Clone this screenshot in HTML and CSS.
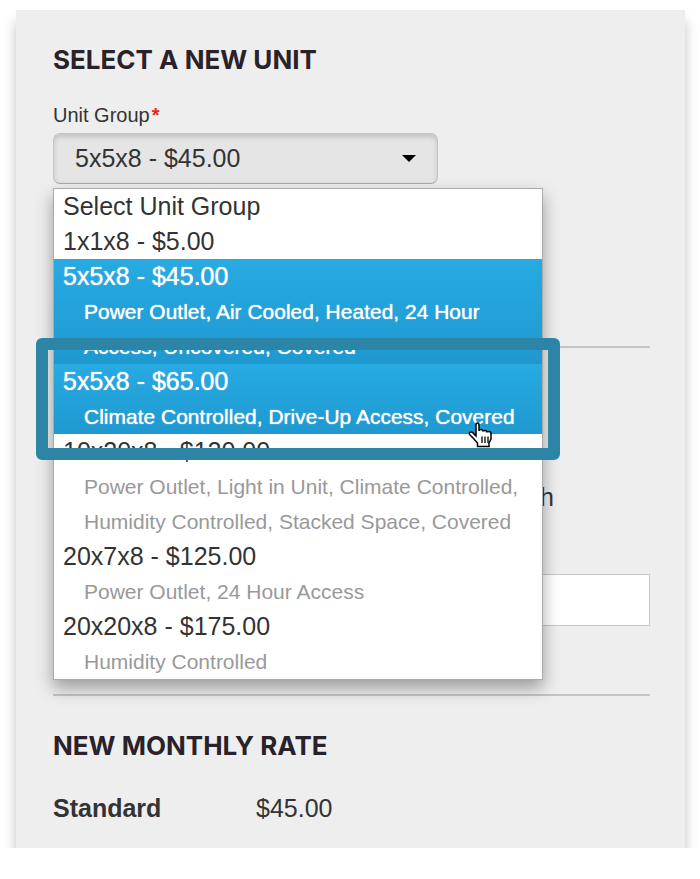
FILE: index.html
```html
<!DOCTYPE html>
<html lang="en">
<head>
    <meta charset="UTF-8">
    <meta name="viewport" content="width=device-width, initial-scale=1.0">
    <title>Select a New Unit</title>
    <link rel="stylesheet" href="styles.css">
</head>
<body>
    <main class="panel">
        <h2>SELECT A NEW UNIT</h2>

        <div class="unit-group">
            <label for="unit-group">Unit Group<span class="required">*</span></label>
            <div class="select-wrap">
                <select id="unit-group">
                    <option>5x5x8 - $45.00</option>
                </select>
                <!-- Open unit list -->
                <ul class="menu" role="listbox" aria-label="Unit Group">
                    <li class="item" role="option">Select Unit Group</li>
                    <li class="item" role="option">1x1x8 - $5.00</li>
                    <li class="item active" role="option" aria-selected="true">5x5x8 - $45.00
                        <span class="features">Power Outlet, Air Cooled, Heated, 24 Hour Access, Uncovered, Covered</span>
                    </li>
                    <li class="item active hovered" role="option">5x5x8 - $65.00
                        <span class="features">Climate Controlled, Drive-Up Access, Covered</span>
                        <svg class="pointer" width="24" height="26" viewBox="0 0 24 26" aria-hidden="true">
                            <path d="M8 14V3Q8 1 9.500 1T11 3V9Q11 7.500 13 7.500T15 9.500Q15 8.500 17 8.500T19 10.500Q19 9.500 21 9.500T23 12V17L21 21V24.500H9.500V21L5.500 16.500L1.500 12.500Q1 10 3 10T6 12Z" fill="white" stroke="black" stroke-width="1.500"/>
                            <path d="M14 14.500V21M17 14.500V21M20 14.500V21" fill="none" stroke="black" stroke-width="1.300"/>
                        </svg>
                    </li>
                    <li class="item" role="option">10x20x8 - $120.00
                        <span class="features">Power Outlet, Light in Unit, Climate Controlled, Humidity Controlled, Stacked Space, Covered</span>
                    </li>
                    <li class="item" role="option">20x7x8 - $125.00
                        <span class="features">Power Outlet, 24 Hour Access</span>
                    </li>
                    <li class="item" role="option">20x20x8 - $175.00
                        <span class="features">Humidity Controlled</span>
                    </li>
                </ul>
            </div>
        </div>

        <div class="details">
            <label class="period" for="amount">month</label>
            <input type="text" id="amount">
        </div>

        <section class="rate">
            <h2>NEW MONTHLY RATE</h2>
            <dl>
                <dt>Standard</dt>
                <dd>$45.00</dd>
            </dl>
        </section>
    </main>
</body>
</html>
```
FILE: styles.css
```css
* {
    box-sizing: border-box;
}

body {
    margin: 0;
    padding: 10px 15px 31px 16px;
    background: white;
    color: #333;
    font-family: "Liberation Sans", Arial, sans-serif;
    font-size: 25px;
    line-height: 35px;
    overflow-x: hidden;
}

.panel {
    padding: 32px 35px 22px 37px;
    background: #eee;
    box-shadow: 0 12px 12px rgba(0, 0, 0, 0.25);
    clip-path: inset(0 -15px 0 -16px);
}

h2 {
    margin: 0;
    font-family: Inter, sans-serif;
    font-size: 26px;
    font-weight: 700;
    line-height: 35px;
    color: #2a222b;
}

.unit-group {
    height: 271px;
    padding-top: 20px;
    border-bottom: 2px solid #c4c4c4;
}

label {
    display: block;
    font-size: 20px;
}

.unit-group label {
    line-height: 36px;
}

.required {
    margin-left: 2px;
    font-weight: bold;
    color: #e22;
}

.select-wrap {
    position: relative;
}

select {
    display: block;
    width: 385px;
    height: 51px;
    padding: 0 21px;
    border: 1px solid #c4c4c4;
    border-bottom-color: #aaa;
    border-radius: 7px;
    background: #e5e5e5;
    box-shadow: inset 0 3px 5px rgba(0, 0, 0, 0.15);
    color: #333;
    font: inherit;
    appearance: none;
}

/* Arrow of the drop-down */
.select-wrap::before {
    content: "";
    position: absolute;
    top: 22px;
    left: 349px;
    border: 7px solid transparent;
    border-top-color: black;
    border-bottom: 0;
}

.menu {
    position: absolute;
    z-index: 1;
    top: 55px;
    left: 0;
    width: 490px;
    margin: 0;
    padding: 0;
    border: 1px solid #aaa;
    background: white;
    box-shadow: 0 8px 16px rgba(0, 0, 0, 0.35);
    list-style: none;
}

.item {
    padding: 0 20px 0 9px;
}

.features {
    display: block;
    padding-left: 21px;
    font-size: 21px;
    color: #999;
}

.active,
.active .features {
    color: white;
}

.active {
    background: linear-gradient(#28aae3, #1e99d0);
    text-shadow: 0 0 1px white;
}

.hovered {
    position: relative;
}

/* Frame around the hovered unit */
.hovered::after {
    content: "";
    position: absolute;
    inset: -26px -18px;
    border: 12px solid #2c84a6;
    border-radius: 6px;
}

.pointer {
    position: absolute;
    right: 50px;
    bottom: -14px;
}

.details {
    padding: 132px 0 68px;
    border-bottom: 2px solid #c4c4c4;
}

.period {
    width: 501px;
    margin-bottom: 59px;
    font-size: 25px;
    text-align: right;
}

input {
    display: block;
    width: 100%;
    height: 52px;
    border: 1px solid #c8c8c8;
    background: white;
    font: inherit;
}

.rate {
    padding-top: 32px;
}

dl {
    display: flex;
    margin: 28px 0 0;
}

dt {
    width: 203px;
    font-weight: bold;
}

dd {
    margin: 0;
}
```
